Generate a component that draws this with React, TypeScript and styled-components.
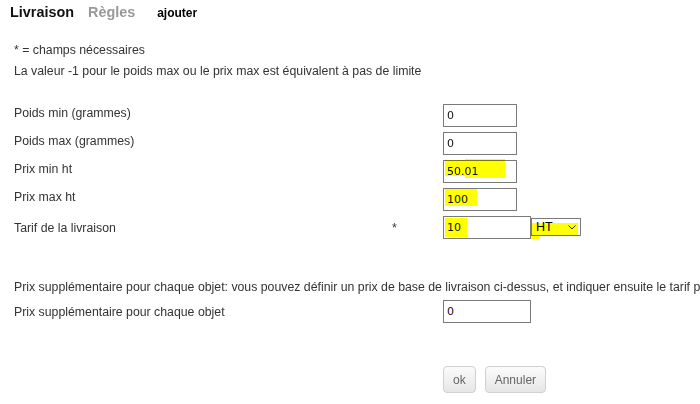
import React from "react";
import styled, { createGlobalStyle } from "styled-components";

const GlobalStyle = createGlobalStyle`
  html, body {
    margin: 0;
    padding: 0;
    background: #fff;
    overflow: hidden;
  }
  body {
    font-family: "Liberation Sans", Arial, sans-serif;
    color: #333;
  }
`;

const Page = styled.div`
  width: 700px;
  height: 404px;
  overflow: hidden;
`;

const Tabs = styled.div`
  display: flex;
  align-items: baseline;
  height: 26px;
  box-sizing: border-box;
  padding: 4px 0 0 10px;
`;

const Tab = styled.span<{ $active?: boolean }>`
  font-size: 14.4px;
  line-height: 17px;
  font-weight: bold;
  color: ${(p) => (p.$active ? "#111" : "#999")};
  margin-right: 14px;
`;

const AddLink = styled.span`
  font-size: 12px;
  font-weight: bold;
  color: #000;
  margin-left: 8px;
`;

const Notes = styled.div`
  margin-top: 14px;
  padding-left: 14px;
`;

const Note = styled.p`
  margin: 0;
  font-size: 12.3px;
  line-height: 21px;
  white-space: nowrap;
`;

const Form = styled.div`
  margin-top: 22px;
  display: flex;
  flex-direction: column;
  gap: 5px;
`;

const Row = styled.div<{ $top?: number }>`
  display: grid;
  grid-template-columns: 378px 51px auto;
  align-items: start;
  padding-left: 14px;
  margin-top: ${(p) => p.$top ?? 0}px;
`;

const Label = styled.span<{ $drop?: number }>`
  font-size: 12.3px;
  line-height: 17px;
  padding-top: ${(p) => 1 + (p.$drop ?? 0)}px;
`;

const Field = styled.div`
  position: relative;
  display: flex;
`;

const Input = styled.div<{ $w: number }>`
  width: ${(p) => p.$w}px;
  height: 23px;
  box-sizing: border-box;
  border: 1px solid #7a7a7a;
  background: #fff;
  padding: 0 3px;
  display: flex;
  align-items: center;
  font-family: "DejaVu Sans", Verdana, sans-serif;
  font-size: 11px;
  color: #111;
`;

const Select = styled.div`
  width: 50px;
  height: 18px;
  margin-top: 2px;
  box-sizing: border-box;
  border: 1px solid #7a7a7a;
  background: #fff;
  display: flex;
  align-items: center;
  justify-content: space-between;
  padding: 0 4px 0 4px;
  font-size: 12.5px;
  color: #000;
`;

const Marker = styled.div<{ $x: number; $y: number; $w: number; $h: number }>`
  position: absolute;
  left: ${(p) => p.$x}px;
  top: ${(p) => p.$y}px;
  width: ${(p) => p.$w}px;
  height: ${(p) => p.$h}px;
  background: #ffff00;
  mix-blend-mode: multiply;
  pointer-events: none;
`;

const LongText = styled.p`
  margin: 40px 0 0;
  padding-left: 14px;
  font-size: 12.3px;
  line-height: 17px;
  white-space: nowrap;
`;

const Actions = styled.div`
  margin-top: 43px;
  padding-left: 443px;
  display: flex;
  gap: 9px;
`;

const Button = styled.button`
  height: 27px;
  padding: 0 9px;
  border: 1px solid #d0d0d0;
  border-radius: 4px;
  background: linear-gradient(#fbfbfb, #e6e6e6);
  font-family: "Liberation Sans", Arial, sans-serif;
  font-size: 12px;
  color: #666;
`;

const Chevron = () => (
  <svg width="8" height="5" viewBox="0 0 8 5" style={{ display: "block" }}>
    <path d="M0.5 0.5 L4 4 L7.5 0.5" fill="none" stroke="#333" strokeWidth="1" />
  </svg>
);

type Mark = { x: number; y: number; w: number; h: number };

const rows: { label: string; value: string; marks?: Mark[] }[] = [
  { label: "Poids min (grammes)", value: "0" },
  { label: "Poids max (grammes)", value: "0" },
  {
    label: "Prix min ht",
    value: "50.01",
    marks: [
      { x: 2, y: 0, w: 52, h: 16 },
      { x: 22, y: -1, w: 40, h: 19 },
    ],
  },
  { label: "Prix max ht", value: "100", marks: [{ x: 2, y: 1, w: 32, h: 17 }] },
];

export default function App() {
  return (
    <Page>
      <GlobalStyle />
      <Tabs>
        <Tab $active>Livraison</Tab>
        <Tab>Règles</Tab>
        <AddLink>ajouter</AddLink>
      </Tabs>
      <Notes>
        <Note>* = champs nécessaires</Note>
        <Note>La valeur -1 pour le poids max ou le prix max est équivalent à pas de limite</Note>
      </Notes>
      <Form>
        {rows.map((r) => (
          <Row key={r.label}>
            <Label>{r.label}</Label>
            <span />
            <Field>
              <Input $w={74}>{r.value}</Input>
              {r.marks?.map((m, i) => (
                <Marker key={i} $x={m.x} $y={m.y} $w={m.w} $h={m.h} />
              ))}
            </Field>
          </Row>
        ))}
        <Row>
          <Label $drop={3}>Tarif de la livraison</Label>
          <Label $drop={3}>*</Label>
          <Field>
            <Input $w={88}>10</Input>
            <Select>
              <span>HT</span>
              <Chevron />
            </Select>
            <Marker $x={2} $y={2} $w={22} $h={19} />
            <Marker $x={89} $y={7} $w={46} $h={13} />
            <Marker $x={88} $y={18} $w={8} $h={5} />
          </Field>
        </Row>
      </Form>
      <LongText>
        Prix supplémentaire pour chaque objet: vous pouvez définir un prix de base de livraison ci-dessus, et indiquer ensuite le tarif par objet supplémentaire
      </LongText>
      <Row $top={4}>
        <Label $drop={3}>Prix supplémentaire pour chaque objet</Label>
        <span />
        <Field>
          <Input $w={88}>0</Input>
        </Field>
      </Row>
      <Actions>
        <Button>ok</Button>
        <Button>Annuler</Button>
      </Actions>
    </Page>
  );
}
